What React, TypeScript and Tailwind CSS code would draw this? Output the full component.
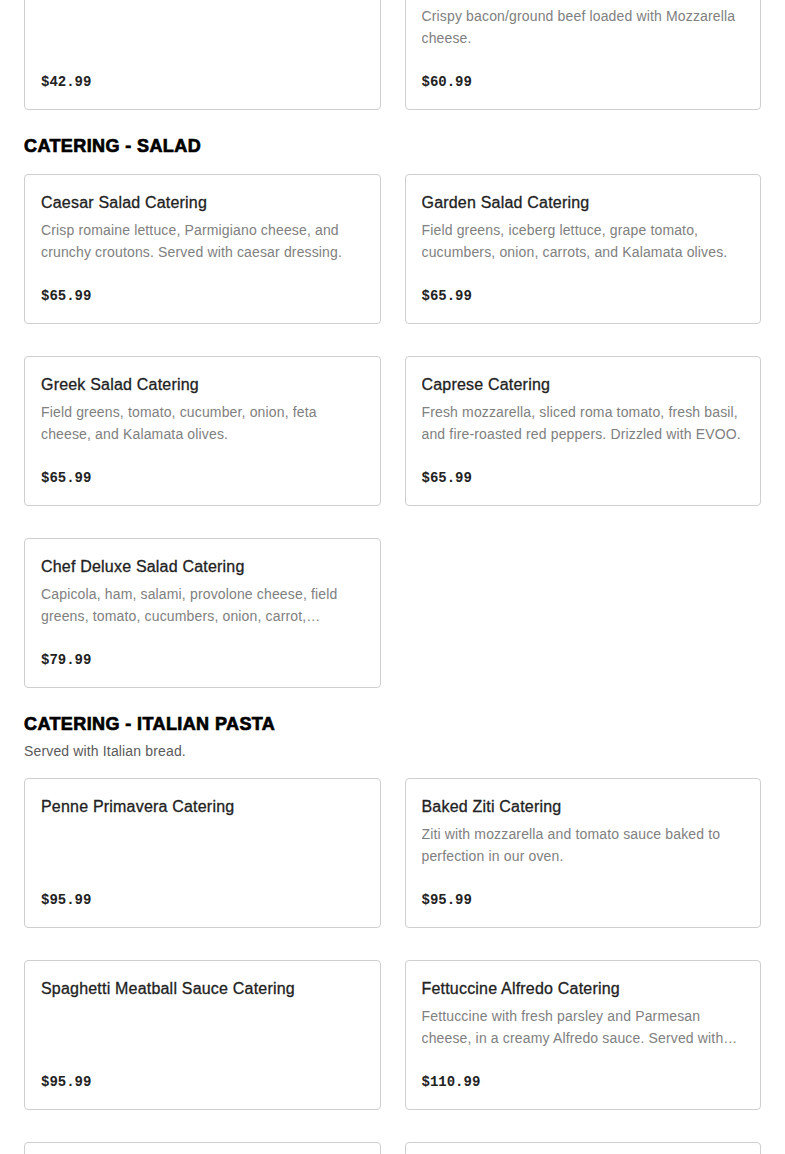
import React from "react";

type Item = { title: string; desc?: string; price: string };
type Section = { heading?: string; sub?: string; items: Item[] };

const sections: Section[] = [
  {
    items: [
      { title: "Garlic Knots Catering", price: "$42.99" },
      {
        title: "Bacon Cheese Fries Catering",
        desc: "Crispy bacon/ground beef loaded with Mozzarella cheese.",
        price: "$60.99",
      },
    ],
  },
  {
    heading: "CATERING - SALAD",
    items: [
      {
        title: "Caesar Salad Catering",
        desc: "Crisp romaine lettuce, Parmigiano cheese, and crunchy croutons. Served with caesar dressing.",
        price: "$65.99",
      },
      {
        title: "Garden Salad Catering",
        desc: "Field greens, iceberg lettuce, grape tomato, cucumbers, onion, carrots, and Kalamata olives.",
        price: "$65.99",
      },
      {
        title: "Greek Salad Catering",
        desc: "Field greens, tomato, cucumber, onion, feta cheese, and Kalamata olives.",
        price: "$65.99",
      },
      {
        title: "Caprese Catering",
        desc: "Fresh mozzarella, sliced roma tomato, fresh basil, and fire-roasted red peppers. Drizzled with EVOO.",
        price: "$65.99",
      },
      {
        title: "Chef Deluxe Salad Catering",
        desc: "Capicola, ham, salami, provolone cheese, field greens, tomato, cucumbers, onion, carrot, pepperoncini, hard boiled egg, and black olives.",
        price: "$79.99",
      },
    ],
  },
  {
    heading: "CATERING - ITALIAN PASTA",
    sub: "Served with Italian bread.",
    items: [
      { title: "Penne Primavera Catering", price: "$95.99" },
      {
        title: "Baked Ziti Catering",
        desc: "Ziti with mozzarella and tomato sauce baked to perfection in our oven.",
        price: "$95.99",
      },
      { title: "Spaghetti Meatball Sauce Catering", price: "$95.99" },
      {
        title: "Fettuccine Alfredo Catering",
        desc: "Fettuccine with fresh parsley and Parmesan cheese, in a creamy Alfredo sauce. Served with garlic bread.",
        price: "$110.99",
      },
      { title: "Lasagna Catering", desc: "Layers of pasta, ricotta and meat sauce.", price: "$110.99" },
      { title: "Chicken Parmigiana Pasta Catering", desc: "Breaded chicken over pasta.", price: "$110.99" },
    ],
  },
];

function Card({ item }: { item: Item }) {
  return (
    <div className="rounded-[4px] border border-[#cfcfcf] bg-white px-4 pt-4 pb-[15px]">
      <div className="text-[16px] leading-6 font-medium tracking-[0.2px] text-[#222] [-webkit-text-stroke:0.3px_#222] [font-family:'Liberation_Sans',Arial,sans-serif] truncate">
        {item.title}
      </div>
      <div className="mt-1 min-h-[44px] text-[14px] leading-[22px] tracking-[0.15px] text-[#808080] line-clamp-2 [font-family:'Liberation_Sans',Arial,sans-serif]">
        {item.desc ?? ""}
      </div>
      <div className="mt-[21px] text-[14px] leading-6 font-bold text-[#222] [font-family:'Liberation_Mono','Courier_New',monospace]">
        {item.price}
      </div>
    </div>
  );
}

export default function App() {
  return (
    <div className="min-h-screen bg-white overflow-hidden">
      <div className="-mt-[40px] px-6 flex flex-col gap-6">
        {sections.map((s, i) => (
          <section key={i}>
            {s.heading && (
              <h2 className="text-[18px] leading-6 font-black text-black tracking-[0.4px] [-webkit-text-stroke:0.7px_black] [font-family:'Liberation_Sans',Arial,sans-serif]">
                {s.heading}
              </h2>
            )}
            {s.sub && (
              <p className="mt-1 text-[14px] leading-[22px] tracking-[0.15px] text-[#5a5a5a] [font-family:'Liberation_Sans',Arial,sans-serif]">
                {s.sub}
              </p>
            )}
            <div className={`grid grid-cols-2 gap-x-6 gap-y-8 ${s.heading ? "mt-4" : ""}`}>
              {s.items.map((it, j) => (
                <Card key={j} item={it} />
              ))}
            </div>
          </section>
        ))}
      </div>
    </div>
  );
}
